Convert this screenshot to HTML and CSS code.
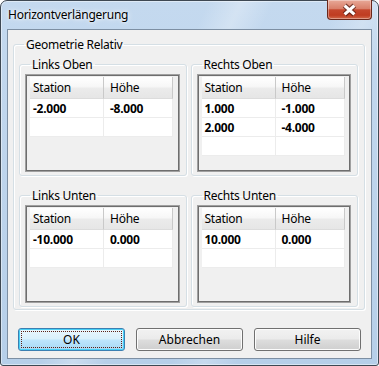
FILE: index.html
```html
<!DOCTYPE html>
<html lang="de">
<head>
    <meta charset="UTF-8">
    <title>Horizontverlängerung</title>
    <link rel="stylesheet" href="styles.css">
</head>
<body>
    <div class="window">
        <div class="titlebar">
            <span class="title">Horizontverlängerung</span>
            <button class="close" aria-label="Schließen">
                <svg width="45" height="20" viewBox="0 0 45 20">
                    <path d="M18 5.5 L28 14.5 M28 5.5 L18 14.5" stroke="#4d1b12" stroke-width="5.5" stroke-opacity="0.7"/>
                    <path d="M18 5.5 L28 14.5 M28 5.5 L18 14.5" stroke="#fff" stroke-width="3.2"/>
                </svg>
            </button>
        </div>
        <div class="client">
            <fieldset class="group outer">
                <legend>Geometrie Relativ</legend>
                <div class="quad">
                    <fieldset class="group">
                        <legend>Links Oben</legend>
                        <div class="grid">
                            <div class="grid-in">
                                <div class="head"><span>Station</span><span>Höhe</span></div>
                                <div class="row"><span>-2.000</span><span>-8.000</span></div>
                                <div class="row"><span></span><span></span></div>
                            </div>
                        </div>
                    </fieldset>
                    <fieldset class="group">
                        <legend>Rechts Oben</legend>
                        <div class="grid">
                            <div class="grid-in">
                                <div class="head"><span>Station</span><span>Höhe</span></div>
                                <div class="row"><span>1.000</span><span>-1.000</span></div>
                                <div class="row"><span>2.000</span><span>-4.000</span></div>
                                <div class="row"><span></span><span></span></div>
                            </div>
                        </div>
                    </fieldset>
                    <fieldset class="group">
                        <legend>Links Unten</legend>
                        <div class="grid">
                            <div class="grid-in">
                                <div class="head"><span>Station</span><span>Höhe</span></div>
                                <div class="row"><span>-10.000</span><span>0.000</span></div>
                                <div class="row"><span></span><span></span></div>
                            </div>
                        </div>
                    </fieldset>
                    <fieldset class="group">
                        <legend>Rechts Unten</legend>
                        <div class="grid">
                            <div class="grid-in">
                                <div class="head"><span>Station</span><span>Höhe</span></div>
                                <div class="row"><span>10.000</span><span>0.000</span></div>
                                <div class="row"><span></span><span></span></div>
                            </div>
                        </div>
                    </fieldset>
                </div>
            </fieldset>
            <div class="buttons">
                <button class="btn default">OK</button>
                <button class="btn">Abbrechen</button>
                <button class="btn">Hilfe</button>
            </div>
        </div>
    </div>
</body>
</html>
```

FILE: styles.css
```css
body {
    margin: 0;
    background: #fff;
    font-family: "Noto Sans", "Open Sans", sans-serif;
    font-size: 12px;
    letter-spacing: -0.25px;
    color: #000;
}
.window {
    width: 379px;
    height: 366px;
    box-sizing: border-box;
    border: 1px solid #3e4853;
    border-radius: 7px 7px 3px 3px;
    background:
        linear-gradient(115deg, rgba(255,255,255,0) 38%, rgba(255,255,255,0.28) 44%, rgba(255,255,255,0) 50%, rgba(255,255,255,0) 62%, rgba(255,255,255,0.22) 68%, rgba(255,255,255,0) 74%),
        linear-gradient(to bottom, #c4d9ef 0%, #bcd3eb 60%, #b6cfe9 100%);
    box-shadow: inset 0 0 0 1px rgba(255,255,255,0.45);
}
.titlebar {
    height: 28px;
    display: flex;
    justify-content: space-between;
    align-items: flex-start;
    padding: 0 6px 0 7px;
}
.title {
    margin-top: 6px;
    line-height: 16px;
    text-shadow: 0 0 6px #fff, 0 0 3px rgba(255,255,255,0.9);
}
.close {
    width: 45px;
    height: 20px;
    margin-top: -1px;
    padding: 0;
    border: 1px solid #6a271a;
    border-top: none;
    border-radius: 0 0 4px 4px;
    background: linear-gradient(to bottom, #e8a998 0%, #d9806a 45%, #c5472d 52%, #c03c21 80%, #d1694a 100%);
    box-shadow: inset 0 0 0 1px rgba(255,255,255,0.35);
    display: flex;
    align-items: center;
    justify-content: center;
}
.close svg {
    display: block;
    margin-left: -1px;
}
.client {
    margin: 0 6px;
    height: 328px;
    border: 1px solid #7d8fa3;
    background: #f0f0f0;
    display: flex;
    flex-direction: column;
}
.group {
    margin: 0;
    padding: 0;
    border: 1px solid #d5dfe5;
    border-radius: 3px;
    box-shadow: inset 1px 1px 0 #fff, 1px 1px 0 #fff;
    min-width: 0;
}
.group legend {
    padding: 0 2px;
    margin-left: 5px;
    line-height: 15px;
}
.outer {
    margin: 7px 6px 0 5px;
    padding: 5px 6px 2px 5px;
}
.quad {
    display: grid;
    grid-template-columns: 1fr 1fr;
    column-gap: 4px;
    row-gap: 12px;
}
.quad .group {
    padding: 2px 6px 3px 5px;
}
.grid {
    height: 98px;
    box-sizing: border-box;
    border: 1px solid #a0a0a0;
}
.grid-in {
    height: 100%;
    box-sizing: border-box;
    border: 1px solid #6e6e6e;
    padding: 1px 0 0 3px;
    background: #f0f0f0;
}
.head, .row {
    display: grid;
    grid-template-columns: 74px 69px;
}
.head span {
    height: 22px;
    line-height: 22px;
    box-sizing: border-box;
    border-right: 1px solid #c9c9c9;
    border-bottom: 1px solid #dcdcdc;
    background: linear-gradient(to bottom, #ffffff 0%, #f7f7f7 45%, #ebebeb 55%, #e6e6e6 100%);
    padding-left: 3px;
}
.head span + span, .row span + span {
    padding-left: 6px;
}
.row span {
    height: 19px;
    line-height: 19px;
    box-sizing: border-box;
    background: #fff;
    border-right: 1px solid #ececec;
    border-bottom: 1px solid #ececec;
    font-weight: bold;
    padding-left: 3px;
}
.buttons {
    display: flex;
    gap: 11px;
    padding: 18px 0 0 10px;
}
.btn {
    width: 107px;
    height: 23px;
    padding: 0;
    font: inherit;
    color: #000;
    border: 1px solid #707070;
    border-radius: 3px;
    background: linear-gradient(to bottom, #f2f2f2 0%, #ebebeb 48%, #dddddd 52%, #cfcfcf 100%);
    box-shadow: inset 0 0 0 1px #fcfcfc;
}
.btn.default {
    border-color: #3c7fb1;
    background: linear-gradient(to bottom, #eaf6fd 0%, #d9f0fc 48%, #bee6fd 52%, #a7d9f5 100%);
    box-shadow: inset 0 0 0 1px #48d0f6;
    outline: 1px dotted #5c2218;
    outline-offset: -4px;
}
```
